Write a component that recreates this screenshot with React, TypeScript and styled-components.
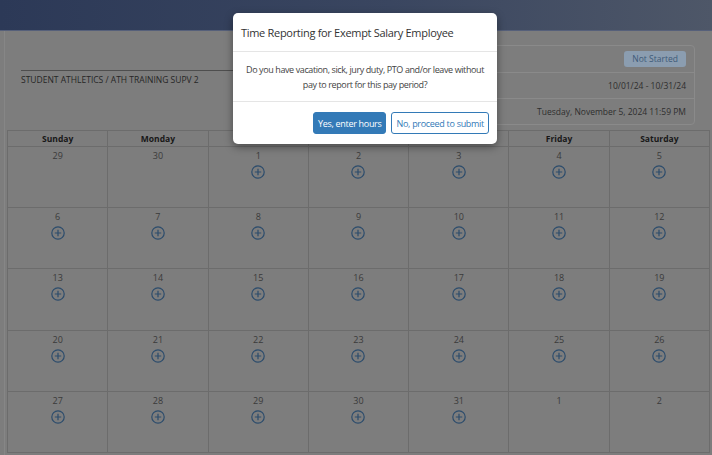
import { createGlobalStyle } from 'styled-components';
import styled from 'styled-components';

const GlobalStyle = createGlobalStyle`
  *, *::before, *::after {
    box-sizing: border-box;
  }
  body {
    margin: 0;
    font-family: "Open Sans", "Liberation Sans", sans-serif;
  }
`;

type IDay = {
  day: number;
  current: boolean;
};

const weekDays = ['Sunday', 'Monday', 'Tuesday', 'Wednesday', 'Thursday', 'Friday', 'Saturday'];

const buildDays = (): IDay[] => {
  const days: IDay[] = [
    { day: 29, current: false },
    { day: 30, current: false },
  ];
  for (let i = 1; i <= 31; i++) days.push({ day: i, current: true });
  days.push({ day: 1, current: false }, { day: 2, current: false });
  return days;
};

const PlusIcon = () => (
  <svg width="14" height="14" viewBox="0 0 14 14" fill="none">
    <circle cx="7" cy="7" r="6.2" stroke="#2c4c6c" strokeWidth="1.2" />
    <path d="M7 3.8v6.4M3.8 7h6.4" stroke="#2c4c6c" strokeWidth="1.2" />
  </svg>
);

// the page is painted in its dimmed state, as it sits behind the open dialog
export default function App() {
  const days = buildDays();

  return (
    <Page>
      <GlobalStyle />
      <TopBar />
      <Main>
        <InfoSection>
          <InfoLeft>
            <LeftRow />
            <LeftRow $line>STUDENT ATHLETICS / ATH TRAINING SUPV 2</LeftRow>
          </InfoLeft>
          <InfoCard>
            <CardRow>
              <Badge>Not Started</Badge>
            </CardRow>
            <CardRow $line>10/01/24 - 10/31/24</CardRow>
            <CardRow $line>Tuesday, November 5, 2024 11:59 PM</CardRow>
          </InfoCard>
        </InfoSection>

        <Calendar>
          {weekDays.map((d) => (
            <DayName key={d}>{d}</DayName>
          ))}
          {days.map((d, i) => (
            <Cell key={i}>
              <DayNumber>{d.day}</DayNumber>
              {d.current && (
                <AddButton>
                  <PlusIcon />
                </AddButton>
              )}
            </Cell>
          ))}
        </Calendar>
      </Main>

      <Modal>
        <ModalHeader>Time Reporting for Exempt Salary Employee</ModalHeader>
        <ModalBody>
          Do you have vacation, sick, jury duty, PTO and/or leave without
          <br />
          pay to report for this pay period?
        </ModalBody>
        <ModalFooter>
          <Button $primary>Yes, enter hours</Button>
          <Button>No, proceed to submit</Button>
        </ModalFooter>
      </Modal>
    </Page>
  );
}

const Page = styled.div`
  position: relative;
  width: 712px;
  height: 455px;
  overflow: hidden;
  background: #7d7d7d;
  color: #2a2a2a;
`;

const TopBar = styled.div`
  height: 31px;
  background: linear-gradient(to right, #2c3957 0%, #3a4660 55%, #4e5768 100%);
  border-bottom: 1px solid #56607a;
`;

const Main = styled.div`
  margin-left: 4px;
  padding: 14px 2px 0 2px;
  height: 424px;
  border-left: 1px solid #868686;
`;

const InfoSection = styled.div`
  display: flex;
  align-items: flex-start;
  gap: 14px;
  padding: 0 15px 0 14px;
`;

const InfoLeft = styled.div`
  width: 48%;
  display: flex;
  flex-direction: column;
`;

const LeftRow = styled.div<{ $line?: boolean }>`
  height: 25px;
  padding-top: 3px;
  font-size: 8.5px;
  line-height: 12px;
  color: #262626;
  border-top: ${(p) => (p.$line ? '1px solid #4e4e4e' : 'none')};
`;

const InfoCard = styled.div`
  flex: 1;
  border: 1px solid #8a8a8a;
  border-radius: 4px;
  display: flex;
  flex-direction: column;
`;

const CardRow = styled.div<{ $line?: boolean }>`
  height: 26px;
  display: flex;
  align-items: center;
  justify-content: flex-end;
  padding: 0 8px;
  font-size: 8.5px;
  color: #2e2e2e;
  border-top: ${(p) => (p.$line ? '1px solid #8a8a8a' : 'none')};
`;

const Badge = styled.span`
  background: #8b9db0;
  color: #3e5a78;
  font-size: 8.5px;
  border-radius: 3px;
  padding: 3px 8px;
  line-height: 10px;
`;

const Calendar = styled.div`
  margin-top: 5px;
  display: grid;
  grid-template-columns: repeat(7, 1fr);
  grid-template-rows: 16px repeat(5, 61.2px);
  border-left: 1px solid #6c6c6c;
  border-top: 1px solid #6c6c6c;
`;

const DayName = styled.div`
  display: flex;
  align-items: center;
  justify-content: center;
  font-size: 8.5px;
  font-weight: 700;
  color: #181818;
  border-right: 1px solid #6c6c6c;
  border-bottom: 1px solid #6c6c6c;
`;

const Cell = styled.div`
  display: flex;
  flex-direction: column;
  align-items: center;
  padding-top: 3px;
  gap: 3px;
  border-right: 1px solid #6c6c6c;
  border-bottom: 1px solid #6c6c6c;
`;

const DayNumber = styled.span`
  font-size: 9px;
  line-height: 12px;
  color: #3a3a3a;
`;

const AddButton = styled.span`
  display: flex;
  width: 14px;
  height: 14px;
`;

const Modal = styled.div`
  position: absolute;
  top: 13px;
  left: 233px;
  width: 264px;
  background: #fff;
  border-radius: 5px;
  box-shadow: 0 3px 9px rgba(0, 0, 0, 0.4);
  display: flex;
  flex-direction: column;
`;

const ModalHeader = styled.div`
  height: 39px;
  display: flex;
  align-items: center;
  padding: 0 8px;
  font-size: 11px;
  letter-spacing: -0.3px;
  color: #333;
  border-bottom: 1px solid #e5e5e5;
`;

const ModalBody = styled.div`
  padding: 10px 6px 9px;
  text-align: center;
  white-space: nowrap;
  font-size: 9px;
  letter-spacing: -0.4px;
  line-height: 15px;
  color: #444;
  border-bottom: 1px solid #e5e5e5;
`;

const ModalFooter = styled.div`
  display: flex;
  justify-content: flex-end;
  gap: 5px;
  padding: 10px 8px 10px;
`;

const Button = styled.button<{ $primary?: boolean }>`
  height: 22px;
  padding: 0 4px;
  font-family: "Open Sans", "Liberation Sans", sans-serif;
  font-size: 9px;
  letter-spacing: -0.3px;
  border-radius: 3px;
  border: 1px solid #337ab7;
  background: ${(p) => (p.$primary ? '#337ab7' : '#fff')};
  color: ${(p) => (p.$primary ? '#fff' : '#337ab7')};
`;
